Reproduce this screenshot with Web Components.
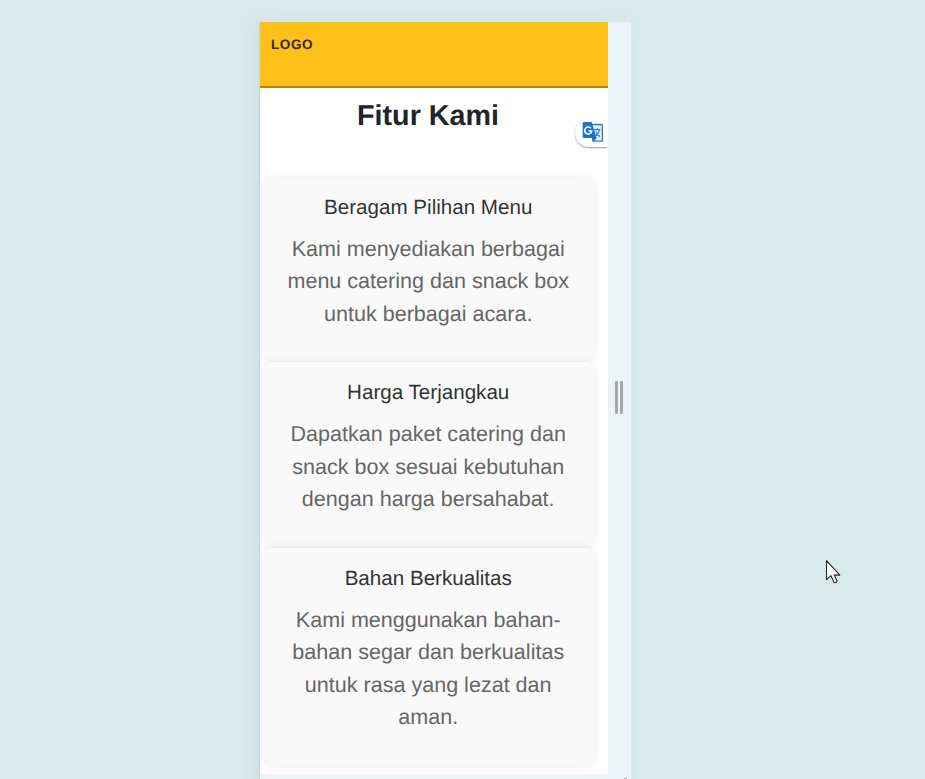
<!DOCTYPE html>
<html lang="id">
<head>
<meta charset="utf-8">
<title>Fitur Kami</title>
<style>
html,body{margin:0;height:100%;overflow:hidden}
body{font-family:"Liberation Sans",Arial,sans-serif;background:#d9eaed;text-rendering:geometricPrecision}
</style>
</head>
<body>
<preview-stage>
  <device-frame>
    <site-header>LOGO</site-header>
    <feature-list heading="Fitur Kami">
      <feature-card><span slot="title">Beragam Pilihan Menu</span>Kami menyediakan berbagai menu catering dan snack box untuk berbagai acara.</feature-card>
      <feature-card><span slot="title">Harga Terjangkau</span>Dapatkan paket catering dan snack box sesuai kebutuhan dengan harga bersahabat.</feature-card>
      <feature-card><span slot="title">Bahan Berkualitas</span>Kami menggunakan bahan-bahan segar dan berkualitas untuk rasa yang lezat dan aman.</feature-card>
    </feature-list>
    <translate-button slot="overlay"></translate-button>
  </device-frame>
  <mouse-pointer></mouse-pointer>
</preview-stage>
<script>
const define = (name, html) => customElements.define(name, class extends HTMLElement {
  constructor() {
    super();
    this.attachShadow({ mode: 'open' }).innerHTML = html;
  }
  connectedCallback() {
    const h = this.shadowRoot.querySelector('[data-heading]');
    if (h) h.textContent = this.getAttribute('heading');
  }
});

define('preview-stage', `<style>
:host{display:block;box-sizing:border-box;position:relative;width:925px;height:779px;padding:22px 0 0 260px;overflow:hidden;background:#d9eaed}
</style><slot></slot>`);

define('device-frame', `<style>
:host{display:grid;grid-template-columns:348px 23px;grid-template-rows:752px 30px;width:371px;position:relative;background:#eaf4f7;box-shadow:-6px 0 20px -2px rgba(120,140,150,.13),-1px 0 0 #d0dde0}
.screen{background:#fff;overflow:hidden}
.rail{display:flex;justify-content:center;gap:2px;padding-top:359px;padding-right:1px}
.rail i{width:3px;height:33px;background:#a2a8aa;border-radius:1px}
.foot{grid-column:1/3;display:flex;justify-content:flex-end;padding:4px 4px 0 0}
.foot i{width:3px;height:1px;background:#a2a8aa}
</style><div class="screen"><slot></slot></div><div class="rail"><i></i><i></i></div><div class="foot"><i></i></div><slot name="overlay"></slot>`);

define('site-header', `<style>
:host{display:block;box-sizing:border-box;height:66px;padding:15px 11px 0;background:#ffc019;border-bottom:2px solid #ad8518;color:#352b1c;font-size:13.5px;font-weight:700;line-height:16px;letter-spacing:.6px}
</style><slot></slot>`);

define('feature-list', `<style>
:host{display:block;padding:11px 15px 0 3px}
h2{margin:0 0 43.1px;font-size:28.7px;line-height:34.5px;text-align:center;color:#212529}
.cards{display:grid;gap:1px;margin-right:-1px}
</style><h2 data-heading></h2><div class="cards"><slot></slot></div>`);

define('feature-card', `<style>
:host{display:block;padding:18px 21.7px 31.3px 21.1px;border-radius:9px;background:#f9f9f9;box-shadow:0 0 10px rgba(0,0,0,.085);text-align:center}
h3{margin:0 0 13px;font-size:20.6px;font-weight:400;line-height:25px;color:#333}
p{margin:0;font-size:21.55px;line-height:32.45px;color:#666}
</style><h3><slot name="title"></slot></h3><p><slot></slot></p>`);

define('translate-button', `<style>
:host{position:absolute;left:314px;top:97px;width:33px;height:30px;overflow:hidden}
.pill{box-sizing:border-box;height:28px;width:40px;margin:0 0 0 1px;padding:2px 0 0 7px;border-radius:14px 0 0 14px;background:#fff;box-shadow:0 1px 2px rgba(0,0,0,.4)}
svg{display:block}
</style><div class="pill"><svg width="22" height="22" viewBox="0 0 22 22">
<path d="M8 3.5h11.6q.8 0 .8.8v15q0 .8-.8.8H11z" fill="#e9f3fc" stroke="#287bcf" stroke-width="1.4"/>
<path d="M2 1h7.6l5 16H2q-1.3 0-1.3-1.3V2.3Q.7 1 2 1z" fill="#1b73cb"/>
<path d="M11 17h3.8l-3.3 3.8z" fill="#1b73cb"/>
<path d="M8.9 7.3A3.5 3.5 0 1 0 9.7 10H6.4" fill="none" stroke="#fff" stroke-width="1.6"/>
<path d="M12 8.7h6.4M15.4 7.2v1.5M17.6 8.8q-.7 3.3-3.8 5.8M13.8 10.4q1.6 3.6 4 5.2" fill="none" stroke="#3986d4" stroke-width="1.3"/>
</svg></div>`);

define('mouse-pointer', `<style>
:host{position:absolute;left:825px;top:559px;width:18px;height:26px}
svg{display:block}
</style><svg width="18" height="26" viewBox="0 0 18 26"><path d="M1.5 1.7v19l4.3-4.1 3.4 7.2q2.5.2 2.9-1.7l-2.9-6h5.6z" fill="#fff" stroke="#20272b" stroke-width="1.1" stroke-linejoin="round"/></svg>`);
</script>
</body>
</html>
